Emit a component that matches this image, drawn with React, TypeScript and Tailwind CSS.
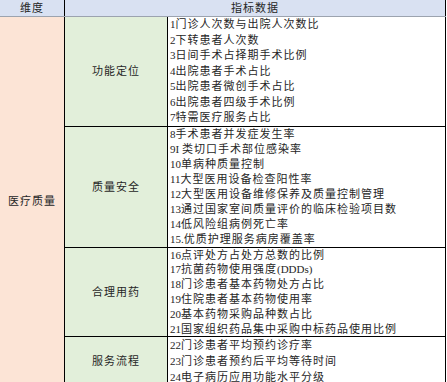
const rows = [
  {
    name: "功能定位",
    height: "h-[110px]",
    leading: "leading-[15.5px]",
    items: [
      "1门诊人次数与出院人次数比",
      "2下转患者人次数",
      "3日间手术占择期手术比例",
      "4出院患者手术占比",
      "5出院患者微创手术占比",
      "6出院患者四级手术比例",
      "7特需医疗服务占比",
    ],
  },
  {
    name: "质量安全",
    height: "h-[121px]",
    leading: "leading-[15px]",
    items: [
      "8手术患者并发症发生率",
      "9I 类切口手术部位感染率",
      "10单病种质量控制",
      "11大型医用设备检查阳性率",
      "12大型医用设备维修保养及质量控制管理",
      "13通过国家室间质量评价的临床检验项目数",
      "14低风险组病例死亡率",
      "15.优质护理服务病房覆盖率",
    ],
  },
  {
    name: "合理用药",
    height: "h-[89px]",
    leading: "leading-[14.8px]",
    items: [
      "16点评处方占处方总数的比例",
      "17抗菌药物使用强度(DDDs)",
      "18门诊患者基本药物处方占比",
      "19住院患者基本药物使用率",
      "20基本药物采购品种数占比",
      "21国家组织药品集中采购中标药品使用比例",
    ],
  },
  {
    name: "服务流程",
    height: "h-[49px]",
    leading: "leading-[16px]",
    items: [
      "22门诊患者平均预约诊疗率",
      "23门诊患者预约后平均等待时间",
      "24电子病历应用功能水平分级",
    ],
  },
];

// latin runs (numbers, DDDs) sit tight, the chinese text is spaced out
function Item({ text }: { text: string }) {
  const parts = text.split(/([0-9A-Za-z.() ]+)/).filter(Boolean);
  return (
    <div className="whitespace-nowrap">
      {parts.map((p, i) =>
        /^[0-9A-Za-z.() ]+$/.test(p) ? (
          <span key={i} className="tracking-normal">
            {p}
          </span>
        ) : (
          <span key={i}>{p}</span>
        )
      )}
    </div>
  );
}

export default function App() {
  return (
    <div
      className="w-[446px] h-[382px] overflow-hidden bg-white text-[11px] tracking-[1px] text-[#262626]"
      style={{ fontFamily: '"Liberation Serif", "Noto Sans CJK SC", serif' }}
    >
      {/* header */}
      <div className="flex h-[17px] bg-[#d9e1f2] border-b border-[#9ca3af] leading-[16px]">
        <div className="w-[65px] border-r border-black text-center">维度</div>
        <div className="w-[381px] border-r border-black text-center">指标数据</div>
      </div>

      <div className="flex">
        <div className="w-[65px] border-r border-black bg-[#fce4d6] flex items-center justify-center">
          医疗质量
        </div>
        <div className="flex flex-col">
          {rows.map((row) => (
            <div key={row.name} className={`flex border-b border-black ${row.height}`}>
              <div className="w-[103px] border-r border-black bg-[#e2efda] flex items-center justify-center">
                {row.name}
              </div>
              <div className={`w-[278px] border-r border-black pl-[2px] flex flex-col justify-center ${row.leading}`}>
                {row.items.map((item) => (
                  <Item key={item} text={item} />
                ))}
              </div>
            </div>
          ))}
        </div>
      </div>
    </div>
  );
}
